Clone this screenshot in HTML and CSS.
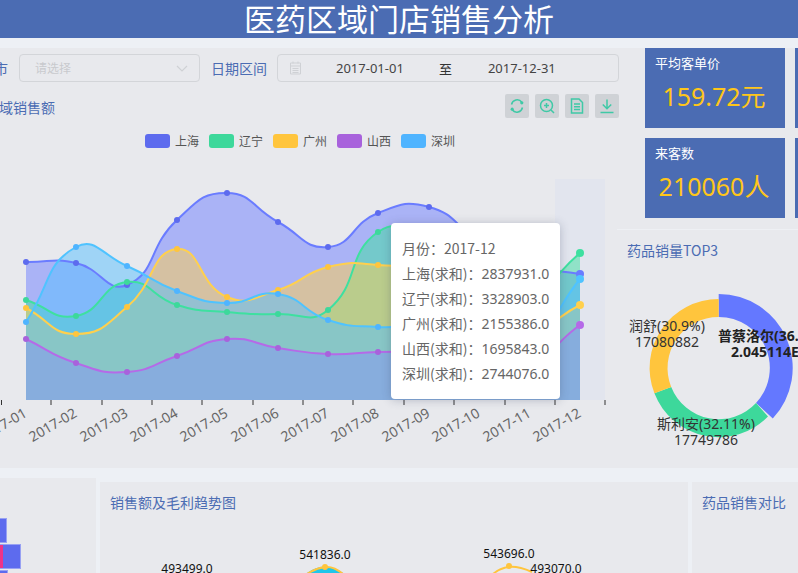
FILE: index.html
```html
<!DOCTYPE html>
<html lang="zh-CN">
<head>
<meta charset="utf-8">
<title>医药区域门店销售分析</title>
<link rel="stylesheet" href="styles.css">
</head>
<body>
<div class="page">
  <header class="head"><h1>医药区域门店销售分析</h1></header>
  <div class="top">
    <section class="main">
      <div class="filters">
        <span class="lbl city-lbl">城市</span>
        <div class="select">
          <span>请选择</span>
          <svg class="chev" viewBox="0 0 12 7"><path d="M1 1l5 5 5-5"/></svg>
        </div>
        <span class="lbl">日期区间</span>
        <div class="range">
          <svg class="cal" viewBox="0 0 13 14"><path d="M1.500 2h10v11h-10zM1.500 5h10M3.500 7.500h6M3.500 9.500h6M3.500 11.500h6M4 .5v2M9 .5v2"/></svg>
          <span class="d1">2017-01-01</span>
          <span class="to">至</span>
          <span class="d2">2017-12-31</span>
        </div>
      </div>
      <div class="titlebar">
        <h2 class="ttl">区域销售额</h2>
        <div class="tools">
          <button class="tool"><svg viewBox="0 0 16 16"><path d="M2.500 6.500A5.800 5.800 0 0 1 12.800 4.200M13.500 9.500A5.800 5.800 0 0 1 3.200 11.800"/><circle class="f" cx="12.800" cy="4.800" r="1.600"/><circle class="f" cx="3.200" cy="11.200" r="1.600"/></svg></button>
          <button class="tool"><svg viewBox="0 0 16 16"><circle cx="7.500" cy="7.500" r="6"/><path d="M12 12l3 3M5 7.500h5M7.500 5v5"/></svg></button>
          <button class="tool"><svg viewBox="0 0 16 16"><path d="M2.500 1h7.500l3.500 3.500V15h-11zM5 6h6M5 8.700h6M5 11.400h6"/></svg></button>
          <button class="tool"><svg viewBox="0 0 16 16"><path d="M8 1.500v9M3.800 6.500L8 10.700l4.200-4.200M1.500 14.500h13"/></svg></button>
        </div>
      </div>
      <div class="legend">
        <span class="leg"><i class="sw c1"></i>上海</span>
        <span class="leg"><i class="sw c2"></i>辽宁</span>
        <span class="leg"><i class="sw c3"></i>广州</span>
        <span class="leg"><i class="sw c4"></i>山西</span>
        <span class="leg"><i class="sw c5"></i>深圳</span>
      </div>
      <div class="chartwrap">
        <svg id="area" class="area" width="657" height="324" viewBox="-40 150 657 324"></svg>
        <div class="tip">
          <p>月份：2017-12</p>
          <p>上海(求和)：<b>2837931.0</b></p>
          <p>辽宁(求和)：<b>3328903.0</b></p>
          <p>广州(求和)：<b>2155386.0</b></p>
          <p>山西(求和)：<b>1695843.0</b></p>
          <p>深圳(求和)：<b>2744076.0</b></p>
        </div>
      </div>
    </section>
    <aside class="side">
      <div class="cards">
        <div class="card"><h3>平均客单价</h3><p class="val v1">159.72元</p></div>
        <div class="card"><h3>平均毛利</h3><p class="val"></p></div>
        <div class="card"><h3>来客数</h3><p class="val v2">210060人</p></div>
        <div class="card"><h3>销售额</h3><p class="val"></p></div>
      </div>
      <div class="rank">
        <h2 class="ttl">药品销量TOP3</h2>
        <svg class="donut" width="181" height="220" viewBox="617 250 181 220">
          <path class="s1" d="M718.700 294A74 74 0 0 1 772.800 418.500L756 402.900A51 51 0 0 0 718.700 317Z"/>
          <path class="s2" d="M768 416.500A69 69 0 0 1 654.400 393.300L671.200 387A51 51 0 0 0 756 402.900Z"/>
          <path class="s3" d="M654.400 393.300A69 69 0 0 1 718.700 299V317A51 51 0 0 0 671.200 387Z"/>
          <text class="pl" x="667" y="331">润舒(30.9%)</text>
          <text class="pl" x="667" y="347">17080882</text>
          <text class="pl" x="706" y="429">斯利安(32.11%)</text>
          <text class="pl" x="706" y="445">17749786</text>
          <text class="pb" x="718" y="341">普蔡洛尔(36.99%)</text>
          <text class="pb" x="731" y="357">2.045114E7</text>
        </svg>
      </div>
    </aside>
  </div>
  <div class="bottom">
    <section class="b1">
      <div class="bars">
        <div class="bar w1"></div>
        <div class="bar w2"><i></i></div>
        <div class="bar w3"></div>
      </div>
    </section>
    <section class="b2">
      <h2 class="ttl">销售额及毛利趋势图</h2>
      <svg class="trend" width="588" height="55" viewBox="100 518 588 55">
        <path class="cy" d="M307 573Q325 560 343 573Z"/>
        <path class="yl" d="M307 574Q316 568 325 567T343 574"/>
        <circle class="pt" cx="325" cy="567" r="3"/>
        <path class="yl" d="M493 574Q500 568 509 567T532 572"/>
        <circle class="pt" cx="509" cy="566" r="3"/>
        <text class="nm" x="187" y="573">493499.0</text>
        <text class="nm" x="325" y="559">541836.0</text>
        <text class="nm" x="509" y="558">543696.0</text>
        <text class="nm" x="556" y="573">493070.0</text>
      </svg>
    </section>
    <section class="b3"><h2 class="ttl">药品销售对比</h2></section>
  </div>
</div>
<script src="chart.js"></script>
</body>
</html>
```
FILE: styles.css
```css
* { box-sizing: border-box; }
html, body { margin: 0; padding: 0; height: 100%; overflow: hidden; }
body { font-family: "Noto Sans", "Noto Sans CJK SC", sans-serif; background: #edf0f5; color: #555; }
.page { width: 838px; height: 573px; margin-left: -40px; overflow: hidden; }
.head { height: 38px; background: #4b6cb3; display: flex; justify-content: center; padding-left: 40px; }
.head h1 { margin: 0; font: 400 31px/36px "Noto Sans CJK SC", sans-serif; color: #fff; white-space: nowrap; }
.top { display: flex; margin-top: 10px; height: 420px; }
.main { width: 657px; height: 420px; flex: none; background: #e8e9ed; position: relative; }
.filters { display: flex; align-items: center; height: 28px; margin-top: 6px; padding-left: 20px; font-size: 14px; }
.filters > * { flex: none; }
.lbl { color: #4b6cb3; font-size: 14px; white-space: nowrap; }
.city-lbl { width: 28px; }
.select { width: 181px; height: 28px; margin-left: 11px; border: 1px solid #d3d5d9; border-radius: 4px; display: flex; align-items: center; justify-content: space-between; padding: 0 11px 0 15px; font-size: 12px; color: #c8cace; }
.chev { width: 12px; height: 7px; fill: none; stroke: #cfd1d5; stroke-width: 1.200; }
.select + .lbl { margin-left: 11px; }
.range { width: 342px; height: 28px; margin-left: 10px; border: 1px solid #d3d5d9; border-radius: 4px; display: flex; align-items: center; font-size: 13px; color: #444; padding-left: 11px; }
.cal { width: 13px; height: 14px; fill: none; stroke: #cfd1d5; stroke-width: 1; }
.d1 { margin-left: 34px; }
.to { margin-left: 35px; font-size: 13px; color: #333; }
.d2 { margin-left: 36px; }
.titlebar { display: flex; justify-content: space-between; align-items: flex-start; margin-top: 12px; padding: 0 0 0 25px; width: 659px; }
.ttl { margin: 0; font: 400 14px/20px "Noto Sans CJK SC", sans-serif; color: #4b6cb3; white-space: nowrap; }
.titlebar .ttl { margin-top: 3px; }
.tools { display: flex; gap: 6px; }
.tool { width: 24px; height: 24px; padding: 4px; border: 0; border-radius: 2px; background: #cfd2d6; display: block; }
.tool svg { display: block; width: 16px; height: 16px; fill: none; stroke: #3fc9a6; stroke-width: 1.500; }
.tool .f { fill: #3fc9a6; stroke: none; }
.legend { display: flex; margin-top: 16px; height: 14px; padding-left: 185px; font-size: 12px; color: #555; gap: 10px; }
.leg { display: flex; align-items: center; gap: 5px; line-height: 14px; font-family: "Noto Sans CJK SC", sans-serif; width: 54px; white-space: nowrap; }
.sw { width: 25px; height: 14px; border-radius: 3px; flex: none; }
.c1 { background: #5d6bee; } .c2 { background: #3dd89b; } .c3 { background: #ffc53d; } .c4 { background: #a862dc; } .c5 { background: #4fb4ff; }
.chartwrap { position: relative; margin-top: 2px; }
.area { display: block; }
.area text { font-size: 14px; fill: #666; text-anchor: end; }
.tip { position: absolute; left: 431px; top: 73px; width: 169px; height: 176px; padding: 13px 10px 0 11px; background: #fff; border-radius: 4px; box-shadow: 0 1px 10px rgba(60, 70, 100, .3); font: 14px/25px "Noto Sans CJK SC", sans-serif; color: #666; white-space: nowrap; }
.tip p { margin: 0; }
.tip b { font-weight: 400; font-family: "Noto Sans", sans-serif; }
.side { width: 181px; height: 420px; flex: none; background: #e8e9ed; overflow: hidden; }
.cards { display: grid; grid-template-columns: 140px 140px; grid-auto-rows: 80px; gap: 10px; align-content: start; padding-left: 28px; height: 180px; }
.card { height: 80px; background: #4b6cb3; padding: 5px 10px; color: #fff; }
.card h3 { margin: 0; font: 400 13px/20px "Noto Sans CJK SC", sans-serif; }
.val { margin: 6px -2px 0 -4px; text-align: center; font: 400 25px/34px "Noto Sans", "Noto Sans CJK SC", sans-serif; color: #ffc61a; white-space: nowrap; }
.rank { margin-top: 1px; padding-top: 10px; border-top: 1px solid #eef0f4; height: 239px; padding-left: 10px; position: relative; }
.donut { display: block; margin-left: -10px; margin-top: -10px; }
.s1 { fill: #6478ff; } .s2 { fill: #3dd89b; } .s3 { fill: #ffc53d; }
.pl { font: 14px "Noto Sans", "Noto Sans CJK SC", sans-serif; fill: #333; text-anchor: middle; }
.pb { font: 700 14px "Noto Sans", "Noto Sans CJK SC", sans-serif; fill: #222; }
.bottom { display: flex; align-items: flex-start; gap: 4px; margin-top: 10px; }
.b1 { width: 136px; height: 95px; flex: none; background: #e8e9ed; padding-top: 40px; overflow: hidden; }
.bars { display: flex; flex-direction: column; gap: 1px; }
.bar { height: 25px; background: #5d6bee; border: 1px solid #98a1f3; border-left: 0; }
.w1 { width: 47px; } .w2 { width: 61px; display: flex; justify-content: flex-start; padding-left: 40px; } .w3 { width: 48px; }
.w2 i { width: 3px; height: 23px; background: #ee3388; display: block; }
.b2 { width: 588px; height: 91px; flex: none; margin-top: 4px; background: #e8e9ed; padding: 10px 10px 0; position: relative; }
.trend { position: absolute; left: 0; top: 36px; }
.cy { fill: #1fc6ea; }
.yl { fill: none; stroke: #ffc53d; stroke-width: 2; }
.pt { fill: #ffc53d; }
.nm { font-size: 12px; fill: #111; text-anchor: middle; }
.b3 { width: 146px; height: 91px; flex: none; margin-top: 4px; background: #e8e9ed; padding: 10px; }
```
FILE: chart.js
```js
(function () {
  var NS = "http://www.w3.org/2000/svg";
  var svg = document.getElementById("area");
  var xs = [26, 76, 127, 177, 227, 278, 328, 378, 429, 479, 530, 580];
  var ticks = [1.5, 51, 102, 152, 202, 253, 303, 353, 404, 454, 505, 555, 605];
  var months = ["01","02","03","04","05","06","07","08","09","10","11","12"];
  var series = [
    { c: "#6a7cff", a: "#6c7dff", p: "#5d6bee", y: [262, 263, 285, 220, 193, 222, 247, 213, 207, 240, 265, 274] },
    { c: "#3ee0a0", a: "#3ee0a0", p: "#3dd89b", y: [300, 316, 282, 305, 312, 314, 310, 232, 240, 300, 295, 253] },
    { c: "#ffd04d", a: "#ffd04d", p: "#ffc53d", y: [308, 334, 307, 249, 297, 290, 267, 265, 275, 320, 330, 305] },
    { c: "#b56ae8", a: "#b56ae8", p: "#a862dc", y: [339, 363, 372, 356, 339, 348, 354, 352, 352, 352, 360, 325] },
    { c: "#4fc3ff", a: "#55c0ff", p: "#4fb4ff", y: [322, 247, 266, 291, 303, 294, 320, 327, 327, 345, 340, 279] }
  ];
  function el(name, attrs, text) {
    var e = document.createElementNS(NS, name);
    for (var k in attrs) e.setAttribute(k, attrs[k]);
    if (text) e.textContent = text;
    svg.appendChild(e);
    return e;
  }
  function smooth(ys) {
    var s = 0.5, pts = xs.map(function (x, i) { return [x, ys[i]]; });
    var ctrl = pts.map(function (p, i) {
      var a = pts[i - 1] || p, b = pts[i + 1] || p;
      var d0 = Math.hypot(p[0] - a[0], p[1] - a[1]), d1 = Math.hypot(b[0] - p[0], b[1] - p[1]);
      var r = d0 + d1 ? d0 / (d0 + d1) : 0, vx = b[0] - a[0], vy = b[1] - a[1];
      return {
        i: [p[0] - vx * s * r, p[1] - vy * s * r],
        o: [p[0] + vx * s * (1 - r), p[1] + vy * s * (1 - r)]
      };
    });
    var d = "M" + pts[0][0] + " " + pts[0][1];
    for (var i = 1; i < pts.length; i++) {
      d += "C" + ctrl[i - 1].o.join(" ") + " " + ctrl[i].i.join(" ") + " " + pts[i].join(" ");
    }
    return d;
  }
  el("rect", { x: 555, y: 179, width: 50, height: 221, fill: "#e2e5ee" });
  series.forEach(function (s) {
    var d = smooth(s.y);
    el("path", { d: d + "L580 400L26 400Z", fill: s.a, "fill-opacity": 0.5, stroke: "none" });
  });
  series.forEach(function (s) {
    el("path", { d: smooth(s.y), fill: "none", stroke: s.c, "stroke-width": 2 });
    xs.forEach(function (x, i) {
      el("circle", { cx: x, cy: s.y[i], r: i === 11 ? 4 : 3, fill: i === 11 ? s.c : s.p });
    });
  });
  ticks.forEach(function (t) {
    el("path", { d: "M" + t + " 400v5", stroke: "#333", "stroke-width": 1 });
  });
  xs.forEach(function (x, i) {
    var ax = x + 2, ay = 416;
    el("text", { x: ax, y: ay, transform: "rotate(-30 " + ax + " " + ay + ")" }, "2017-" + months[i]);
  });
})();
```
